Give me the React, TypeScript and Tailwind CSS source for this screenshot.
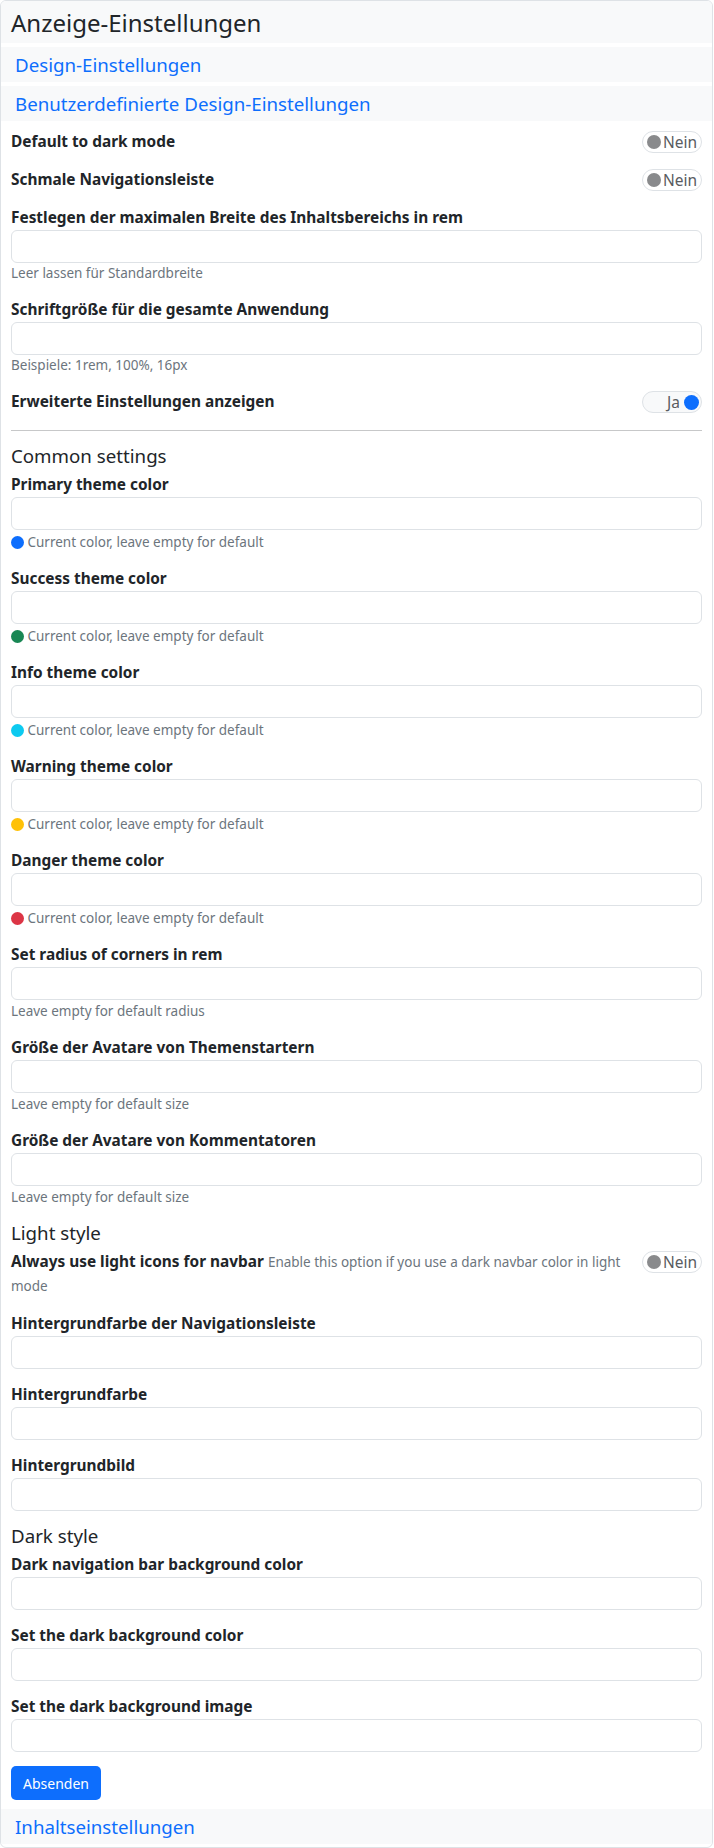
import React from "react";

const font = { fontFamily: '"Noto Sans", "Open Sans", sans-serif' };

function Toggle({ on }: { on: boolean }) {
  if (on) {
    return (
      <div className="flex h-[22px] w-[60px] shrink-0 items-center justify-end rounded-full border border-[#dee2e6] bg-[#f8f9fa] pr-[2px]">
        <span className="text-[15.5px] leading-[21px] text-[#595c5f]">Ja</span>
        <span className="ml-[4px] h-[15px] w-[15px] rounded-full bg-[#0d6efd]" />
      </div>
    );
  }
  return (
    <div className="flex h-[22px] w-[60px] shrink-0 items-center rounded-full border border-[#dee2e6] bg-white pl-[4px]">
      <span className="h-[14px] w-[14px] rounded-full bg-[#898a8c]" />
      <span className="ml-[2px] text-[15.5px] leading-[21px] text-[#595c5f]">Nein</span>
    </div>
  );
}

function ToggleRow({ label, on, className = "mb-[14px]" }: { label: string; on: boolean; className?: string }) {
  return (
    <div className={"flex h-[24px] items-center justify-between " + className}>
      <span className="text-[15.4px] font-bold leading-[24px] text-[#212529]">{label}</span>
      <Toggle on={on} />
    </div>
  );
}

// gap: space between the input and its help line
function Field({
  label,
  help,
  color,
  gap = "mt-[1px]",
}: {
  label: string;
  help?: string;
  color?: string;
  gap?: string;
}) {
  return (
    <div className="mb-[14px]">
      <label className="block h-[24px] text-[15.4px] font-bold leading-[24px] text-[#212529]">{label}</label>
      <input
        type="text"
        className="block h-[33px] w-full rounded-[6px] border border-[#dee2e6] bg-white px-[12px] text-[16px] outline-none"
      />
      {help && (
        <div className={gap + " h-[21px] text-[13.5px] leading-[21px] text-[#6c757d]"}>
          {color && (
            <span
              className="mr-[4px] inline-block h-[12.5px] w-[12.5px] rounded-full align-[-1.5px]"
              style={{ backgroundColor: color }}
            />
          )}
          {help}
        </div>
      )}
    </div>
  );
}

function Heading({ children }: { children: React.ReactNode }) {
  return <h5 className="mb-[6px] h-[22px] text-[18.7px] leading-[22px] text-[#212529]">{children}</h5>;
}

function SectionHeader({ children }: { children: React.ReactNode }) {
  return (
    <div className="mt-[4px] flex h-[35px] items-center bg-[#f8f9fa] px-[14px] text-[18.7px] leading-[22px] text-[#0d6efd]">
      {children}
    </div>
  );
}

export default function App() {
  const colors = [
    { label: "Primary theme color", color: "#0d6efd" },
    { label: "Success theme color", color: "#198754" },
    { label: "Info theme color", color: "#0dcaf0" },
    { label: "Warning theme color", color: "#ffc107" },
    { label: "Danger theme color", color: "#dc3545" },
  ];

  return (
    <div className="min-h-[1848px] bg-white" style={font}>
      <div className="w-[713px] rounded-[6px] border border-[#dee2e6] bg-white pb-[3px]">
        <div className="flex h-[42px] items-center rounded-t-[5px] bg-[#f8f9fa] px-[10px]">
          <h4 className="text-[24px] leading-[29px] text-[#212529]">Anzeige-Einstellungen</h4>
        </div>

        <SectionHeader>Design-Einstellungen</SectionHeader>
        <SectionHeader>Benutzerdefinierte Design-Einstellungen</SectionHeader>

        <form className="px-[10px] pb-[5px] pt-[9px]" onSubmit={(e) => e.preventDefault()}>
          <ToggleRow label="Default to dark mode" on={false} />
          <ToggleRow label="Schmale Navigationsleiste" on={false} />
          <Field
            label="Festlegen der maximalen Breite des Inhaltsbereichs in rem"
            help="Leer lassen für Standardbreite"
            gap=""
          />
          <Field label="Schriftgröße für die gesamte Anwendung" help="Beispiele: 1rem, 100%, 16px" gap="" />
          <ToggleRow label="Erweiterte Einstellungen anzeigen" on={true} className="mb-[16px]" />
          <hr className="mb-[14px] border-t border-[#c7c8c9]" />

          <Heading>Common settings</Heading>
          {colors.map((c) => (
            <Field
              key={c.label}
              label={c.label}
              help="Current color, leave empty for default"
              color={c.color}
              gap="mt-[2px]"
            />
          ))}
          <Field label="Set radius of corners in rem" help="Leave empty for default radius" />
          <Field label="Größe der Avatare von Themenstartern" help="Leave empty for default size" />
          <Field label="Größe der Avatare von Kommentatoren" help="Leave empty for default size" />

          <Heading>Light style</Heading>
          <div className="mb-[14px] flex h-[48px] items-start justify-between gap-[10px]">
            <div className="flex-1 text-[15.4px] leading-[24px]">
              <span className="font-bold text-[#212529]">Always use light icons for navbar</span>{" "}
              <span className="text-[13.5px] leading-[16px] text-[#6c757d]">
                Enable this option if you use a dark navbar color in light mode
              </span>
            </div>
            <div className="pt-[1px]">
              <Toggle on={false} />
            </div>
          </div>
          <Field label="Hintergrundfarbe der Navigationsleiste" />
          <Field label="Hintergrundfarbe" />
          <Field label="Hintergrundbild" />

          <Heading>Dark style</Heading>
          <Field label="Dark navigation bar background color" />
          <Field label="Set the dark background color" />
          <Field label="Set the dark background image" />

          <button
            type="submit"
            className="h-[34px] rounded-[5px] bg-[#0d6efd] px-[12px] text-[14px] leading-[21px] text-white"
          >
            Absenden
          </button>
        </form>

        <SectionHeader>Inhaltseinstellungen</SectionHeader>
      </div>
    </div>
  );
}
